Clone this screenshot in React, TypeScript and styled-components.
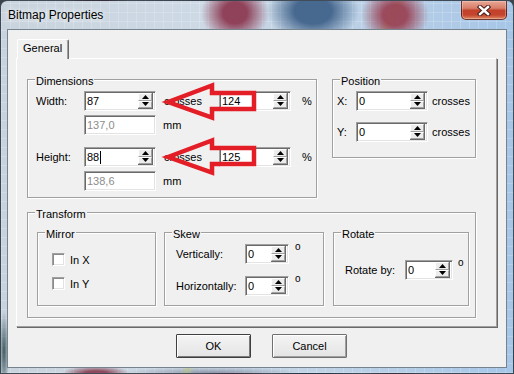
import React from 'react';
import styled, { createGlobalStyle } from 'styled-components';

const GlobalStyle = createGlobalStyle`
  html, body {
    margin: 0;
    padding: 0;
    background: #3c434a;
  }
  body {
    font-family: "Liberation Sans", Arial, sans-serif;
    font-size: 11px;
    color: #000;
  }
`;

const Window = styled.div`
  position: relative;
  box-sizing: border-box;
  width: 514px;
  height: 374px;
  display: flex;
  flex-direction: column;
  border: 1px solid rgba(30, 40, 50, 0.8);
  border-radius: 7px 7px 0 0;
  overflow: hidden;
  background:
    radial-gradient(ellipse 34px 30px at 234px 12px, rgba(140, 58, 82, 0.95) 35%, rgba(140, 58, 82, 0) 100%),
    radial-gradient(ellipse 46px 32px at 312px 10px, rgba(64, 98, 138, 0.95) 40%, rgba(64, 98, 138, 0) 100%),
    radial-gradient(ellipse 34px 30px at 394px 14px, rgba(152, 60, 78, 0.9) 35%, rgba(152, 60, 78, 0) 100%),
    linear-gradient(120deg, rgba(190, 200, 120, 0) 0 340px, rgba(190, 200, 120, 0.55) 346px, rgba(190, 200, 120, 0) 352px),
    radial-gradient(ellipse 34px 7px at 95px 372px, rgba(130, 50, 70, 0.85) 30%, rgba(130, 50, 70, 0) 100%),
    radial-gradient(ellipse 90px 6px at 210px 372px, rgba(90, 100, 125, 0.6), rgba(90, 100, 125, 0)),
    radial-gradient(ellipse 5px 40px at 3px 350px, rgba(40, 70, 72, 0.85), rgba(40, 70, 72, 0)),
    repeating-linear-gradient(90deg, rgba(255, 255, 255, 0.18) 0 1px, rgba(255, 255, 255, 0) 1px 9px),
    repeating-linear-gradient(0deg, rgba(255, 255, 255, 0.18) 0 1px, rgba(255, 255, 255, 0) 1px 9px),
    linear-gradient(90deg, #c8d3dd 0%, #cdd9e5 40%, #b4cde6 80%, #a6c6e8 100%);
`;

const TitleBar = styled.div`
  height: 28px;
  flex: none;
  display: flex;
  justify-content: space-between;
  align-items: flex-start;
`;

const TitleText = styled.div`
  padding: 7px 0 0 7px;
  font-size: 12px;
  line-height: 14px;
  color: #000;
  text-shadow: 0 0 6px rgba(255, 255, 255, 0.9), 0 0 10px rgba(255, 255, 255, 0.7);
`;

const CloseButton = styled.div`
  box-sizing: border-box;
  width: 46px;
  height: 19px;
  margin-right: 6px;
  display: flex;
  align-items: center;
  justify-content: center;
  border: 1px solid rgba(70, 20, 20, 0.75);
  border-top: none;
  border-radius: 0 0 5px 5px;
  background: linear-gradient(180deg, #e9a896 0%, #d77d68 40%, #c2412b 52%, #c4452d 78%, #de8a66 100%);
  box-shadow: inset 0 0 0 1px rgba(255, 220, 210, 0.35);
`;

const Frame = styled.div`
  flex: 1;
  display: flex;
  padding: 0 6px 5px 6px;
`;

const Client = styled.div`
  flex: 1;
  box-sizing: border-box;
  display: flex;
  flex-direction: column;
  background: #f0f0f0;
  border: 1px solid #75838f;
`;

const TabArea = styled.div`
  padding: 9px 9px 0 8px;
`;

const TabStrip = styled.div`
  display: flex;
  padding-left: 1px;
`;

const Tab = styled.div`
  position: relative;
  z-index: 1;
  box-sizing: border-box;
  width: 52px;
  height: 20px;
  margin-bottom: -1px;
  padding: 2px 0 0 5px;
  line-height: 13px;
  background: #f0f0f0;
  border-top: 1px solid #fff;
  border-left: 1px solid #fff;
  border-right: 1px solid #696969;
  box-shadow: inset -1px 0 0 #a0a0a0;
  border-radius: 2px 2px 0 0;
`;

const TabPanel = styled.div`
  box-sizing: border-box;
  width: 481px;
  height: 269px;
  padding: 20px 0 0 10px;
  border-top: 1px solid #fff;
  border-left: 1px solid #fff;
  border-right: 1px solid #a0a0a0;
  border-bottom: 1px solid #a0a0a0;
  box-shadow: 1px 1px 0 #696969;
`;

const GroupRow = styled.div<{ $gap: number }>`
  display: flex;
  align-items: flex-start;
  gap: ${(p) => p.$gap}px;
`;

const Group = styled.div<{ $w: number; $h: number; $mt?: number; $ml?: number }>`
  box-sizing: border-box;
  flex: none;
  width: ${(p) => p.$w}px;
  height: ${(p) => p.$h}px;
  margin-top: ${(p) => p.$mt ?? 0}px;
  margin-left: ${(p) => p.$ml ?? 0}px;
  display: flex;
  flex-direction: column;
  border: 1px solid #a0a0a0;
  box-shadow: inset 1px 1px 0 #fff, 1px 1px 0 #fff;
`;

const Legend = styled.div`
  align-self: flex-start;
  margin: -5px 0 0 7px;
  padding: 0 1px;
  line-height: 13px;
  background: #f0f0f0;
`;

const GroupBody = styled.div<{ $pl: number }>`
  display: flex;
  flex-direction: column;
  padding-left: ${(p) => p.$pl}px;
`;

const Row = styled.div<{ $mt?: number; $h?: number }>`
  display: flex;
  align-items: center;
  height: ${(p) => p.$h ?? 20}px;
  margin-top: ${(p) => p.$mt ?? 0}px;
`;

const Label = styled.span<{ $w: number }>`
  flex: none;
  width: ${(p) => p.$w}px;
  white-space: nowrap;
`;

const Unit = styled.span<{ $ml: number; $w?: number }>`
  flex: none;
  margin-left: ${(p) => p.$ml}px;
  width: ${(p) => (p.$w ? `${p.$w}px` : 'auto')};
  white-space: nowrap;
`;

const Degree = styled.span<{ $ml: number }>`
  align-self: flex-start;
  margin: -2px 0 0 ${(p) => p.$ml}px;
  font-size: 10px;
  line-height: 10px;
`;

const TextBox = styled.div<{ $w: number; $disabled?: boolean }>`
  box-sizing: border-box;
  flex: none;
  width: ${(p) => p.$w}px;
  height: 20px;
  display: flex;
  align-items: center;
  padding-left: 2px;
  background: #fff;
  color: ${(p) => (p.$disabled ? '#8d8d8d' : '#000')};
  border: 1px solid;
  border-color: #a0a0a0 #fff #fff #a0a0a0;
  box-shadow: inset 1px 1px 0 #696969, inset -1px -1px 0 #e3e3e3;
`;

const Caret = styled.span`
  display: inline-block;
  width: 1px;
  height: 13px;
  margin-left: 1px;
  background: #000;
`;

const Spinner = styled.div`
  box-sizing: border-box;
  width: 15px;
  height: 16px;
  margin: 0 2px 0 auto;
  display: flex;
  flex-direction: column;
  border-right: 1px solid #696969;
  border-bottom: 1px solid #696969;
`;

const SpinHalf = styled.div`
  flex: 1;
  display: flex;
  align-items: center;
  justify-content: center;
  background: #ececec;
  border-top: 1px solid #fff;
  border-left: 1px solid #fff;
  border-bottom: 1px solid #a0a0a0;
  border-right: 1px solid #a0a0a0;
`;

const CheckBox = styled.span`
  box-sizing: border-box;
  flex: none;
  width: 13px;
  height: 13px;
  background: #fff;
  border: 1px solid;
  border-color: #a0a0a0 #fff #fff #a0a0a0;
  box-shadow: inset 1px 1px 0 #8a8a8a, inset -1px -1px 0 #e3e3e3;
`;

const ButtonRow = styled.div`
  display: flex;
  gap: 21px;
  padding: 7px 0 0 168px;
`;

const Button = styled.button<{ $default?: boolean }>`
  box-sizing: border-box;
  width: 75px;
  height: 24px;
  padding: 0;
  font-family: "Liberation Sans", Arial, sans-serif;
  font-size: 11px;
  color: #000;
  background: linear-gradient(180deg, #f4f4f4 0%, #ececec 50%, #e4e4e4 100%);
  border: 1px solid ${(p) => (p.$default ? '#3f3f3f' : '#707070')};
  box-shadow: inset 1px 1px 0 #fff,
    inset -1px -1px 0 ${(p) => (p.$default ? '#7a7a7a' : '#a0a0a0')};
  border-radius: 1px;
`;

const Overlay = styled.svg`
  position: absolute;
  left: -1px;
  top: -1px;
  pointer-events: none;
`;

function Spin() {
  return (
    <Spinner>
      <SpinHalf>
        <svg width="7" height="4" viewBox="0 0 7 4">
          <polygon points="0,4 3.5,0 7,4" fill="#000" />
        </svg>
      </SpinHalf>
      <SpinHalf>
        <svg width="7" height="4" viewBox="0 0 7 4">
          <polygon points="0,0 7,0 3.5,4" fill="#000" />
        </svg>
      </SpinHalf>
    </Spinner>
  );
}

function SpinBox({ w, children }: { w: number; children: React.ReactNode }) {
  return (
    <TextBox $w={w}>
      {children}
      <Spin />
    </TextBox>
  );
}

// outline of one red arrow, the lower one sits 55px further down
const arrow = (dy: number) =>
  [
    [168, 102],
    [212, 85.5],
    [212, 93],
    [254, 93],
    [254, 109],
    [212, 109],
    [212, 117.5],
  ]
    .map(([x, y]) => `${x},${y + dy}`)
    .join(' ');

export default function App() {
  return (
    <>
      <GlobalStyle />
      <Window>
        <TitleBar>
          <TitleText>Bitmap Properties</TitleText>
          <CloseButton>
            <svg width="14" height="11" viewBox="0 0 14 11">
              <path d="M3 2 L11 9 M11 2 L3 9" stroke="#4a1c1c" strokeWidth="4.4" strokeLinecap="square" />
              <path d="M3 2 L11 9 M11 2 L3 9" stroke="#fff" strokeWidth="2.4" strokeLinecap="square" />
            </svg>
          </CloseButton>
        </TitleBar>

        <Frame>
          <Client>
            <TabArea>
              <TabStrip>
                <Tab>General</Tab>
              </TabStrip>
              <TabPanel>
                <GroupRow $gap={15}>
                  <Group $w={290} $h={119}>
                    <Legend>Dimensions</Legend>
                    <GroupBody $pl={8}>
                      <Row $mt={3}>
                        <Label $w={48}>Width:</Label>
                        <SpinBox w={72}>87</SpinBox>
                        <Unit $ml={8} $w={55}>crosses</Unit>
                        <SpinBox w={72}>124</SpinBox>
                        <Unit $ml={11}>%</Unit>
                      </Row>
                      <Row $mt={4}>
                        <Label $w={48} />
                        <TextBox $w={72} $disabled>137,0</TextBox>
                        <Unit $ml={7}>mm</Unit>
                      </Row>
                      <Row $mt={12}>
                        <Label $w={48}>Height:</Label>
                        <SpinBox w={72}>
                          88<Caret />
                        </SpinBox>
                        <Unit $ml={8} $w={55}>crosses</Unit>
                        <SpinBox w={72}>125</SpinBox>
                        <Unit $ml={11}>%</Unit>
                      </Row>
                      <Row $mt={4}>
                        <Label $w={48} />
                        <TextBox $w={72} $disabled>138,6</TextBox>
                        <Unit $ml={7}>mm</Unit>
                      </Row>
                    </GroupBody>
                  </Group>

                  <Group $w={144} $h={79}>
                    <Legend>Position</Legend>
                    <GroupBody $pl={4}>
                      <Row $mt={3}>
                        <Label $w={19}>X:</Label>
                        <SpinBox w={72}>0</SpinBox>
                        <Unit $ml={4}>crosses</Unit>
                      </Row>
                      <Row $mt={11}>
                        <Label $w={19}>Y:</Label>
                        <SpinBox w={72}>0</SpinBox>
                        <Unit $ml={4}>crosses</Unit>
                      </Row>
                    </GroupBody>
                  </Group>
                </GroupRow>

                <Group $w={449} $h={106} $mt={14}>
                  <Legend>Transform</Legend>
                  <GroupRow $gap={0}>
                    <Group $w={119} $h={74} $mt={11} $ml={9}>
                      <Legend>Mirror</Legend>
                      <GroupBody $pl={14}>
                        <Row $mt={12} $h={13}>
                          <CheckBox />
                          <Unit $ml={5}>In X</Unit>
                        </Row>
                        <Row $mt={11} $h={13}>
                          <CheckBox />
                          <Unit $ml={5}>In Y</Unit>
                        </Row>
                      </GroupBody>
                    </Group>

                    <Group $w={160} $h={74} $mt={11} $ml={8}>
                      <Legend>Skew</Legend>
                      <GroupBody $pl={11}>
                        <Row $mt={3}>
                          <Label $w={69}>Vertically:</Label>
                          <SpinBox w={44}>0</SpinBox>
                          <Degree $ml={6}>o</Degree>
                        </Row>
                        <Row $mt={12}>
                          <Label $w={69}>Horizontally:</Label>
                          <SpinBox w={44}>0</SpinBox>
                          <Degree $ml={6}>o</Degree>
                        </Row>
                      </GroupBody>
                    </Group>

                    <Group $w={136} $h={74} $mt={11} $ml={9}>
                      <Legend>Rotate</Legend>
                      <GroupBody $pl={11}>
                        <Row $mt={19}>
                          <Label $w={60}>Rotate by:</Label>
                          <SpinBox w={48}>0</SpinBox>
                          <Degree $ml={5}>o</Degree>
                        </Row>
                      </GroupBody>
                    </Group>
                  </GroupRow>
                </Group>
              </TabPanel>
            </TabArea>

            <ButtonRow>
              <Button $default>OK</Button>
              <Button>Cancel</Button>
            </ButtonRow>
          </Client>
        </Frame>

        <Overlay width="514" height="374" viewBox="0 0 514 374">
          <polygon points={arrow(0)} fill="none" stroke="#e41e26" strokeWidth="4.5" strokeLinejoin="miter" />
          <polygon points={arrow(55)} fill="none" stroke="#e41e26" strokeWidth="4.5" strokeLinejoin="miter" />
        </Overlay>
      </Window>
    </>
  );
}
